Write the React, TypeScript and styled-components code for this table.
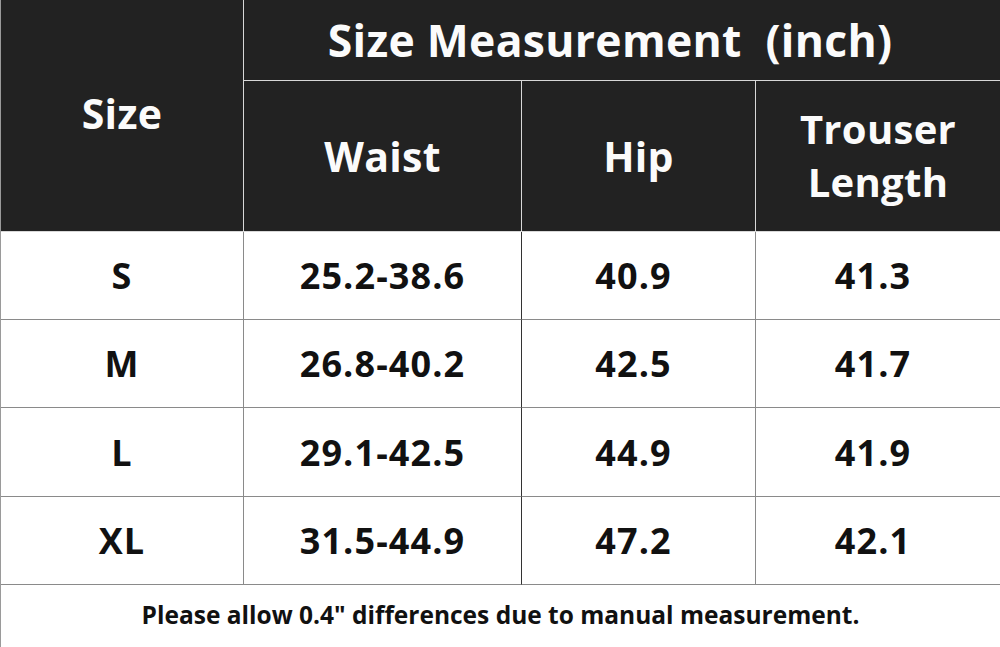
import React from 'react'
import styled, { createGlobalStyle } from 'styled-components'

type Row = {
  size: string
  waist: string
  hip: string
  length: string
}

const rows: Array<Row> = [
  { size: 'S', waist: '25.2-38.6', hip: '40.9', length: '41.3' },
  { size: 'M', waist: '26.8-40.2', hip: '42.5', length: '41.7' },
  { size: 'L', waist: '29.1-42.5', hip: '44.9', length: '41.9' },
  { size: 'XL', waist: '31.5-44.9', hip: '47.2', length: '42.1' },
]

const GlobalStyle = createGlobalStyle`
  html, body {
    margin: 0;
    padding: 0;
    background: #fff;
  }
  * {
    box-sizing: border-box;
  }
`

const Sheet = styled.div`
  width: 1000px;
  height: 647px;
  display: grid;
  grid-template-columns: 243px 278px 234px 1fr;
  grid-template-rows: 81px 151px 88px 88px 89px 88px 1fr;
  font-family: 'Open Sans', 'Noto Sans', sans-serif;
  font-weight: 700;
  color: #111;
  border-left: 1px solid #9a9a9a;
`

const HeadCell = styled.div<{ $span?: number; $rows?: number; $size: number; $last?: boolean; $pad?: number }>`
  grid-column: span ${(p) => p.$span || 1};
  grid-row: span ${(p) => p.$rows || 1};
  background: #222222;
  color: #fbfbfb;
  display: flex;
  align-items: center;
  justify-content: center;
  text-align: center;
  font-size: ${(p) => p.$size}px;
  line-height: 1.32;
  letter-spacing: 0.3px;
  padding-right: ${(p) => p.$pad || 0}px;
  border-right: ${(p) => (p.$last ? 'none' : '1px solid #d8d8d8')};
  border-bottom: 1px solid #d8d8d8;
`

const Cell = styled.div<{ $dark?: boolean; $last?: boolean; $pad?: number }>`
  display: flex;
  align-items: center;
  justify-content: center;
  font-size: 36px;
  letter-spacing: 1.1px;
  padding-right: ${(p) => p.$pad || 0}px;
  border-right: ${(p) => (p.$last ? 'none' : `1px solid ${p.$dark ? '#333' : '#8a8a8a'}`)};
  border-bottom: 1px solid #8a8a8a;
`

const Note = styled.div`
  grid-column: 1 / -1;
  display: flex;
  align-items: center;
  justify-content: center;
  font-size: 24.5px;
  padding-bottom: 4px;
`

const App = () => {
  return (
    <>
      <GlobalStyle />
      <Sheet>
        <HeadCell $rows={2} $size={41} style={{ gridRow: '1 / 3' }}>
          <span style={{ marginTop: -4 }}>Size</span>
        </HeadCell>
        <HeadCell $span={3} $size={44.5} $last $pad={24}>
          Size Measurement&nbsp;&nbsp;(inch)
        </HeadCell>
        <HeadCell $size={41}>Waist</HeadCell>
        <HeadCell $size={41}>Hip</HeadCell>
        <HeadCell $size={40} $last>
          Trouser
          <br />
          Length
        </HeadCell>
        {rows.map((row) => (
          <React.Fragment key={row.size}>
            <Cell>{row.size}</Cell>
            <Cell $dark>{row.waist}</Cell>
            <Cell $pad={10}>{row.hip}</Cell>
            <Cell $pad={10} $last>
              {row.length}
            </Cell>
          </React.Fragment>
        ))}
        <Note>Please allow 0.4" differences due to manual measurement.</Note>
      </Sheet>
    </>
  )
}

export default App
